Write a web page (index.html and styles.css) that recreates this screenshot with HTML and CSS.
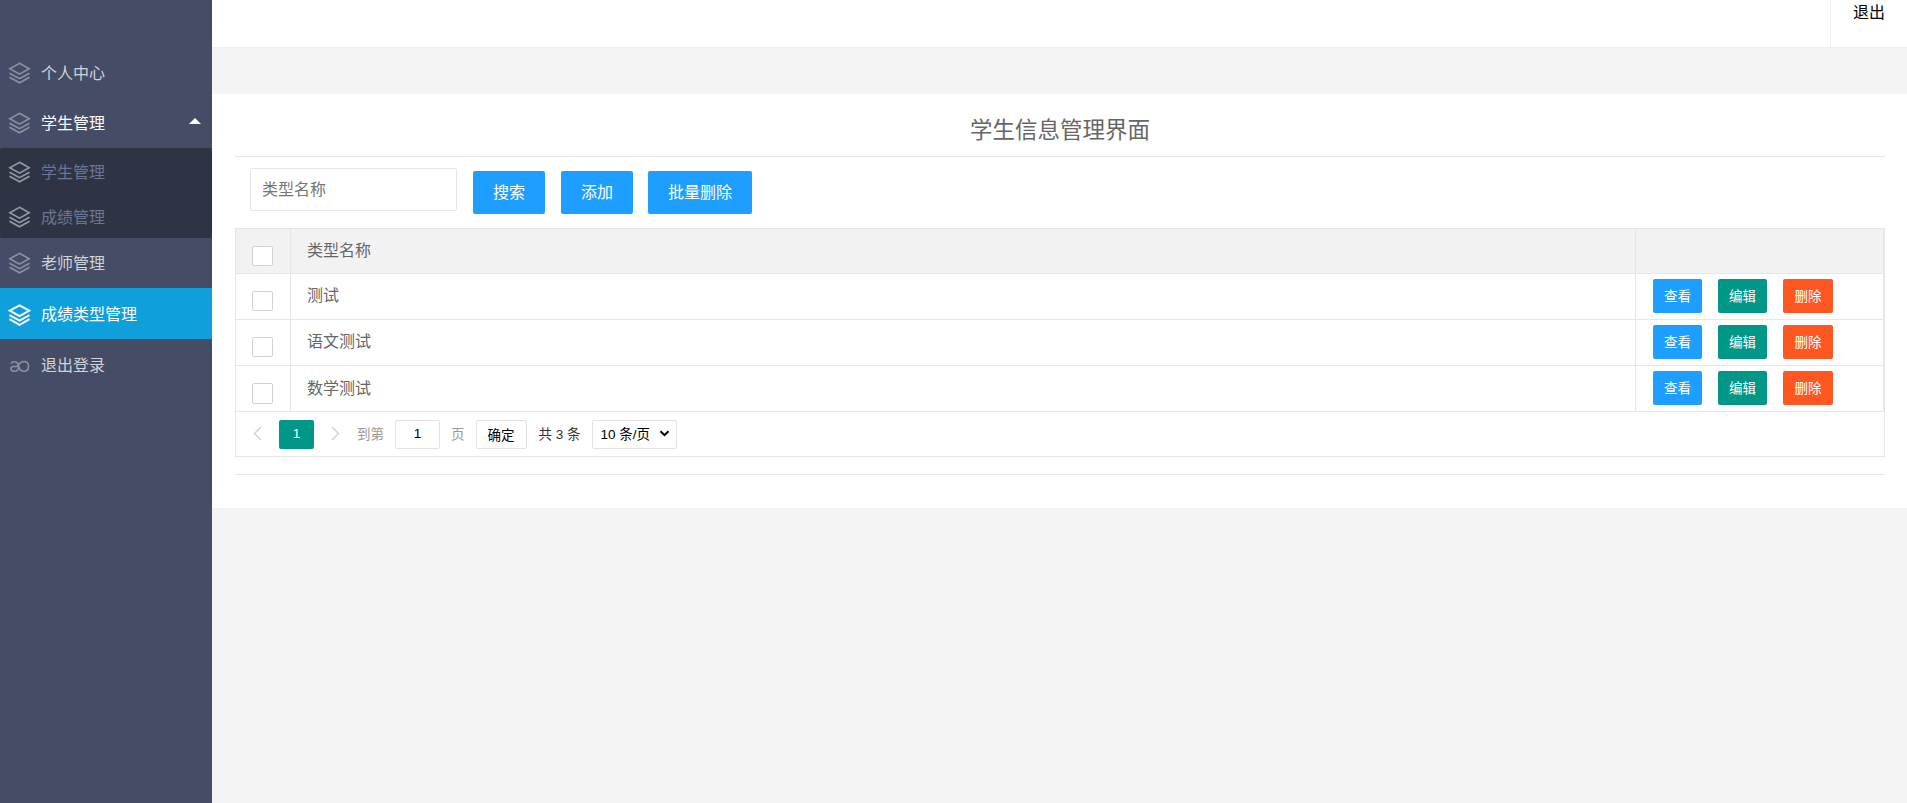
FILE: index.html
```
<!DOCTYPE html>
<html lang="zh-CN">

<head>
    <meta charset="UTF-8">
    <title>学生信息管理界面</title>
    <link rel="stylesheet" href="styles.css">
</head>

<body>
    <svg class="symbols">
        <symbol id="layers" viewBox="0 0 22 22">
            <path d="M11 1.3 L20.7 6.7 L11 12.2 L1.3 6.7 Z" />
            <path d="M1 11.2 L11 16.7 L21 11.2" />
            <path d="M1 15.2 L11 20.8 L21 15.2" />
        </symbol>
        <symbol id="exit" viewBox="0 0 22 22">
            <path d="M2.500 8.500 C4 5.800 9.500 6 10 10.500 C10.400 14 9 16.300 6 16.300 C1.300 16.300 1.300 11.500 5 11.500 H8 C10 11.500 10.500 6.500 15.500 6.500 C18.500 6.500 20 8.500 20 11.400 C20 14.300 18.500 16.300 15.500 16.300 C12.500 16.300 10.800 14 10.500 11.500" />
        </symbol>
    </svg>
    <div class="layout">
        <div class="side">
            <ul class="nav">
                <li class="item"><svg class="icon"><use href="#layers" /></svg><span>个人中心</span></li>
                <li class="item opened"><svg class="icon"><use href="#layers" /></svg><span>学生管理</span><i class="arrow"></i></li>
                <li>
                    <ul class="sub-nav">
                        <li class="item"><svg class="icon"><use href="#layers" /></svg><span>学生管理</span></li>
                        <li class="item"><svg class="icon"><use href="#layers" /></svg><span>成绩管理</span></li>
                    </ul>
                </li>
                <li class="item"><svg class="icon"><use href="#layers" /></svg><span>老师管理</span></li>
                <li class="item active"><svg class="icon"><use href="#layers" /></svg><span>成绩类型管理</span></li>
                <li class="item logout"><svg class="icon"><use href="#exit" /></svg><span>退出登录</span></li>
            </ul>
        </div>
        <div class="main">
            <div class="header"><a class="quit">退出</a></div>
            <div class="content">
                <h1 class="title">学生信息管理界面</h1>
                <div class="search">
                    <input type="text" class="keyword" placeholder="类型名称">
                    <button class="btn">搜索</button>
                    <button class="btn">添加</button>
                    <button class="btn wide">批量删除</button>
                </div>
                <div class="table-box">
                    <div class="row head">
                        <div class="check"><i class="checkbox"></i></div>
                        <div class="name">类型名称</div>
                        <div class="tools"></div>
                    </div>
                    <div class="row">
                        <div class="check"><i class="checkbox"></i></div>
                        <div class="name">测试</div>
                        <div class="tools"><button class="btn-sm">查看</button><button class="btn-sm edit">编辑</button><button class="btn-sm del">删除</button></div>
                    </div>
                    <div class="row">
                        <div class="check"><i class="checkbox"></i></div>
                        <div class="name">语文测试</div>
                        <div class="tools"><button class="btn-sm">查看</button><button class="btn-sm edit">编辑</button><button class="btn-sm del">删除</button></div>
                    </div>
                    <div class="row last">
                        <div class="check"><i class="checkbox"></i></div>
                        <div class="name">数学测试</div>
                        <div class="tools"><button class="btn-sm">查看</button><button class="btn-sm edit">编辑</button><button class="btn-sm del">删除</button></div>
                    </div>
                    <div class="page">
                        <svg class="prev" viewBox="0 0 9 15"><path d="M8 1 L1.500 7.500 L8 14" /></svg>
                        <span class="curr">1</span>
                        <svg class="next" viewBox="0 0 9 15"><path d="M1 1 L7.500 7.500 L1 14" /></svg>
                        <span class="goto">到第</span>
                        <input type="text" class="page-input" value="1">
                        <span class="unit">页</span>
                        <button class="ok">确定</button>
                        <span class="count">共 3 条</span>
                        <span class="limits">10 条/页<svg class="caret" viewBox="0 0 10 7"><path d="M1 1.200 L5 5.200 L9 1.200" /></svg></span>
                    </div>
                </div>
                <hr class="line">
            </div>
        </div>
    </div>
</body>

</html>
```
FILE: styles.css
```
* {
    box-sizing: border-box;
}

body {
    margin: 0;
    font-family: "Liberation Sans", "Noto Sans CJK SC", sans-serif;
    font-size: 16px;
    color: #666;
    background: #f4f4f4;
}

ul {
    list-style: none;
    margin: 0;
    padding: 0;
}

input,
button {
    font: inherit;
    margin: 0;
    padding: 0;
}

.symbols {
    display: none;
}

.layout {
    display: flex;
    height: 803px;
}

.side {
    width: 212px;
    padding-top: 48px;
    background: #454d66;
}

.item {
    display: flex;
    align-items: center;
    height: 50px;
    padding-left: 8px;
    color: #d0d2d9;
}

.item span {
    padding-bottom: 2px;
}

.icon {
    width: 23px;
    height: 22px;
    margin-right: 10px;
    fill: none;
    stroke: #8c91a1;
    stroke-width: 1.6;
}

.opened {
    color: #fff;
}

.arrow {
    margin-left: auto;
    margin-right: 11px;
    margin-top: -4px;
    border: 6px solid transparent;
    border-top: 0;
    border-bottom-color: #fff;
}

.sub-nav {
    background: #2f3445;
    border-radius: 2px;
}

.sub-nav .item {
    height: 45px;
    padding-top: 2px;
    color: #6b7594;
}

.sub-nav .icon {
    stroke: #9699a4;
}

.active {
    height: 51px;
    background: #0f9fdb;
    color: #fff;
}

.active .icon {
    margin-top: 3px;
    stroke: #fff;
    stroke-width: 1.9;
}

.logout {
    height: 53px;
}

.logout span {
    padding-bottom: 3px;
}

.main {
    flex: 1;
}

.header {
    height: 48px;
    display: flex;
    justify-content: flex-end;
    background: #fff;
    border-bottom: 1px solid #eee;
}

.quit {
    width: 77px;
    border-left: 1px solid #f0f0f0;
    padding-left: 22px;
    line-height: 25px;
    color: #000;
}

.content {
    height: 414px;
    margin-top: 46px;
    padding: 0 22px 0 23px;
    background: #fff;
}

.title {
    margin: 0;
    height: 63px;
    line-height: 73px;
    border-bottom: 1px solid #e6e6e6;
    font-size: 22.5px;
    font-weight: 400;
    text-align: center;
}

.search {
    display: flex;
    height: 71px;
    padding: 11px 0 0 15px;
}

.keyword {
    width: 207px;
    height: 43px;
    margin-right: 16px;
    padding-left: 11px;
    border: 1px solid #e6e6e6;
    border-radius: 2px;
}

.keyword::placeholder {
    color: #757575;
}

.btn {
    width: 72px;
    height: 43px;
    margin-top: 3px;
    margin-right: 16px;
    padding-bottom: 3px;
    border: 0;
    border-radius: 2px;
    background: #1e9fff;
    color: #fff;
}

.wide {
    width: 104px;
    margin-left: -1px;
}

.table-box {
    height: 229px;
    border: 1px solid #e6e6e6;
}

.row {
    display: flex;
    height: 46px;
    border-bottom: 1px solid #e6e6e6;
    border-right: 1px solid #e6e6e6;
}

.head {
    height: 45px;
    background: #f2f2f2;
}

.check {
    width: 55px;
    padding: 17px 0 0 16px;
    border-right: 1px solid #e6e6e6;
}

.checkbox {
    display: block;
    width: 21px;
    height: 20px;
    border: 1px solid #d2d2d2;
    border-radius: 2px;
    background: #fff;
}

.last .checkbox {
    height: 21px;
}

.name {
    flex: 1;
    padding-left: 16px;
    line-height: 43px;
    border-right: 1px solid #e6e6e6;
}

.last .name {
    line-height: 46px;
}

.tools {
    display: flex;
    gap: 16px;
    width: 247px;
    padding: 5px 0 0 17px;
}

.btn-sm {
    width: 49px;
    height: 34px;
    padding-bottom: 3px;
    border: 0;
    border-radius: 2px;
    background: #1e9fff;
    color: #fff;
    font-size: 13.5px;
}

.edit {
    background: #009688;
}

.del {
    width: 50px;
    background: #ff5722;
}

.page {
    display: flex;
    align-items: center;
    height: 44px;
    padding-left: 17px;
    font-size: 13.5px;
    color: #333;
}

.prev,
.next {
    width: 9px;
    height: 15px;
    margin-bottom: 2px;
    fill: none;
    stroke: #d2d2d2;
    stroke-width: 1.5;
}

.curr {
    width: 35px;
    height: 29px;
    margin: 0 17px;
    border-radius: 2px;
    background: #009688;
    color: #fff;
    line-height: 28px;
    text-align: center;
}

.goto,
.unit {
    padding-bottom: 2px;
    color: #999;
}

.goto {
    margin-left: 17px;
}

.page-input {
    width: 45px;
    height: 29px;
    margin: 0 11px;
    padding-bottom: 1px;
    border: 1px solid #e2e2e2;
    border-radius: 2px;
    text-align: center;
}

.ok {
    width: 51px;
    height: 29px;
    margin-left: 11px;
    border: 1px solid #e2e2e2;
    border-radius: 2px;
    background: #fff;
}

.count {
    width: 42px;
    margin: 0 11px 0 12px;
    padding-bottom: 2px;
    white-space: nowrap;
}

.limits {
    display: flex;
    align-items: center;
    width: 85px;
    height: 29px;
    padding: 0 0 2px 8px;
    border: 1px solid #e2e2e2;
    border-radius: 2px;
    color: #000;
}

.caret {
    width: 11px;
    height: 7px;
    margin-left: 9px;
    fill: none;
    stroke: #000;
    stroke-width: 2;
}

.line {
    margin: 17px 0 0;
    border: 0;
    border-top: 1px solid #e6e6e6;
}
```
